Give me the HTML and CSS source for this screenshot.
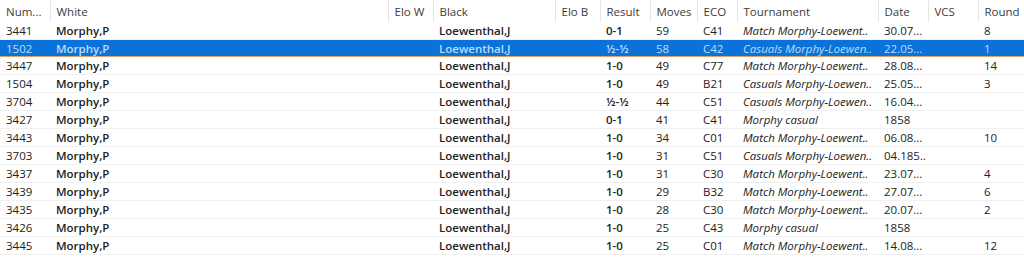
FILE: index.html
```html
<!DOCTYPE html>
<html lang="en">
<head>
    <meta charset="UTF-8">
    <title>Game List</title>
    <link rel="stylesheet" href="styles.css">
</head>
<body>
    <table class="games">
        <colgroup>
            <col class="c-num">
            <col class="c-white">
            <col class="c-elo">
            <col class="c-black">
            <col class="c-elo">
            <col class="c-result">
            <col class="c-moves">
            <col class="c-eco">
            <col class="c-tour">
            <col class="c-date">
            <col class="c-vcs">
            <col class="c-round">
        </colgroup>
        <thead>
            <tr>
                <th>Num...</th>
                <th>White</th>
                <th>Elo W</th>
                <th>Black</th>
                <th>Elo B</th>
                <th>Result</th>
                <th>Moves</th>
                <th>ECO</th>
                <th>Tournament</th>
                <th>Date</th>
                <th>VCS</th>
                <th>Round</th>
            </tr>
        </thead>
        <tbody>
            <tr><td>3441</td><td class="b">Morphy,P</td><td></td><td class="b">Loewenthal,J</td><td></td><td class="b">0-1</td><td>59</td><td>C41</td><td class="i">Match Morphy-Loewent..</td><td>30.07...</td><td></td><td>8</td></tr>
            <tr class="selected"><td>1502</td><td class="b">Morphy,P</td><td></td><td class="b">Loewenthal,J</td><td></td><td class="b">½-½</td><td>58</td><td>C42</td><td class="i">Casuals Morphy-Loewen..</td><td>22.05...</td><td></td><td>1</td></tr>
            <tr><td>3447</td><td class="b">Morphy,P</td><td></td><td class="b">Loewenthal,J</td><td></td><td class="b">1-0</td><td>49</td><td>C77</td><td class="i">Match Morphy-Loewent..</td><td>28.08...</td><td></td><td>14</td></tr>
            <tr><td>1504</td><td class="b">Morphy,P</td><td></td><td class="b">Loewenthal,J</td><td></td><td class="b">1-0</td><td>49</td><td>B21</td><td class="i">Casuals Morphy-Loewen..</td><td>25.05...</td><td></td><td>3</td></tr>
            <tr><td>3704</td><td class="b">Morphy,P</td><td></td><td class="b">Loewenthal,J</td><td></td><td class="b">½-½</td><td>44</td><td>C51</td><td class="i">Casuals Morphy-Loewen..</td><td>16.04...</td><td></td><td></td></tr>
            <tr><td>3427</td><td class="b">Morphy,P</td><td></td><td class="b">Loewenthal,J</td><td></td><td class="b">0-1</td><td>41</td><td>C41</td><td class="i">Morphy casual</td><td>1858</td><td></td><td></td></tr>
            <tr><td>3443</td><td class="b">Morphy,P</td><td></td><td class="b">Loewenthal,J</td><td></td><td class="b">1-0</td><td>34</td><td>C01</td><td class="i">Match Morphy-Loewent..</td><td>06.08...</td><td></td><td>10</td></tr>
            <tr><td>3703</td><td class="b">Morphy,P</td><td></td><td class="b">Loewenthal,J</td><td></td><td class="b">1-0</td><td>31</td><td>C51</td><td class="i">Casuals Morphy-Loewen..</td><td>04.185..</td><td></td><td></td></tr>
            <tr><td>3437</td><td class="b">Morphy,P</td><td></td><td class="b">Loewenthal,J</td><td></td><td class="b">1-0</td><td>31</td><td>C30</td><td class="i">Match Morphy-Loewent..</td><td>23.07...</td><td></td><td>4</td></tr>
            <tr><td>3439</td><td class="b">Morphy,P</td><td></td><td class="b">Loewenthal,J</td><td></td><td class="b">1-0</td><td>29</td><td>B32</td><td class="i">Match Morphy-Loewent..</td><td>27.07...</td><td></td><td>6</td></tr>
            <tr><td>3435</td><td class="b">Morphy,P</td><td></td><td class="b">Loewenthal,J</td><td></td><td class="b">1-0</td><td>28</td><td>C30</td><td class="i">Match Morphy-Loewent..</td><td>20.07...</td><td></td><td>2</td></tr>
            <tr><td>3426</td><td class="b">Morphy,P</td><td></td><td class="b">Loewenthal,J</td><td></td><td class="b">1-0</td><td>25</td><td>C43</td><td class="i">Morphy casual</td><td>1858</td><td></td><td></td></tr>
            <tr><td>3445</td><td class="b">Morphy,P</td><td></td><td class="b">Loewenthal,J</td><td></td><td class="b">1-0</td><td>25</td><td>C01</td><td class="i">Match Morphy-Loewent..</td><td>14.08...</td><td></td><td>12</td></tr>
        </tbody>
    </table>
</body>
</html>
```

FILE: styles.css
```css
body {
    margin: 0;
    background-color: #ffffff;
    font-family: 'Open Sans', 'Noto Sans', sans-serif;
    font-size: 11.5px;
    color: #222222;
}
.games {
    width: 1024px;
    border-collapse: collapse;
    table-layout: fixed;
}
.c-num { width: 50px; }
.c-white { width: 338px; }
.c-elo { width: 45px; }
.c-black { width: 122px; }
.c-result { width: 50px; }
.c-moves { width: 47px; }
.c-eco { width: 40px; }
.c-tour { width: 141px; }
.c-date { width: 50px; }
.c-vcs { width: 50px; }
.c-round { width: 46px; }
th, td {
    padding: 0 0 0 6px;
    text-align: left;
    white-space: nowrap;
    overflow: hidden;
}
th {
    height: 22px;
    font-weight: normal;
    color: #3c3c3c;
    border-right: 1px solid #e5e5e5;
}
td {
    height: 17px;
    border-bottom: 1px solid #f0f0f0;
}
td.b {
    font-weight: 600;
}
td.i {
    font-style: italic;
}
tr.selected td {
    background-color: #0a72d8;
    color: #b9dcff;
    border-top: 1px solid #d9a46b;
    border-bottom: 1px solid #d9a46b;
    height: 16px;
}
```
